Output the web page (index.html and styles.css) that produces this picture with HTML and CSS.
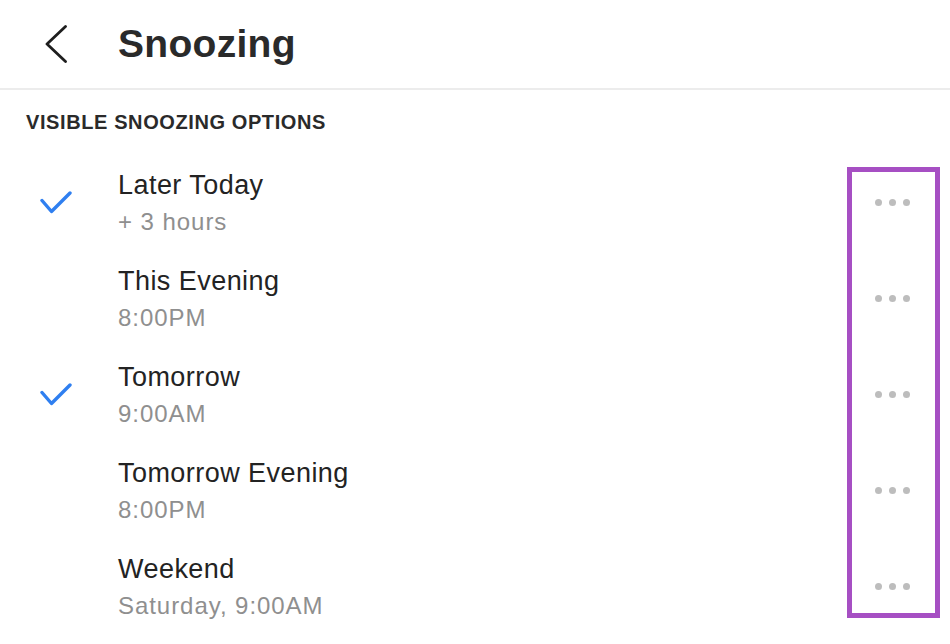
FILE: index.html
```html
<!DOCTYPE html>
<html lang="en">
<head>
<meta charset="utf-8">
<title>Snoozing</title>
<link rel="stylesheet" href="styles.css">
</head>
<body>
<div class="page">
  <header class="topbar">
    <svg class="back" width="22" height="38" viewBox="0 0 22 38" aria-hidden="true">
      <path d="M20.5 1.5 L2 19 L20.5 36.5" fill="none" stroke="#1e1e1e" stroke-width="2.8" stroke-linecap="round" stroke-linejoin="round"/>
    </svg>
    <h1 class="title">Snoozing</h1>
  </header>

  <h2 class="section-label">VISIBLE SNOOZING OPTIONS</h2>

  <ul class="options">
    <li class="option">
      <div class="check-col">
        <svg class="check" width="32" height="24" viewBox="0 0 32 24" aria-hidden="true">
          <path d="M2 9.5 L11.5 20.5 L30 2" fill="none" stroke="#2f7ff0" stroke-width="3.4" stroke-linecap="round" stroke-linejoin="round"/>
        </svg>
      </div>
      <div class="text">
        <div class="name">Later Today</div>
        <div class="when">+ 3 hours</div>
      </div>
      <div class="more"><span></span><span></span><span></span></div>
    </li>
    <li class="option">
      <div class="check-col"></div>
      <div class="text">
        <div class="name">This Evening</div>
        <div class="when">8:00PM</div>
      </div>
      <div class="more"><span></span><span></span><span></span></div>
    </li>
    <li class="option">
      <div class="check-col">
        <svg class="check" width="32" height="24" viewBox="0 0 32 24" aria-hidden="true">
          <path d="M2 9.5 L11.5 20.5 L30 2" fill="none" stroke="#2f7ff0" stroke-width="3.4" stroke-linecap="round" stroke-linejoin="round"/>
        </svg>
      </div>
      <div class="text">
        <div class="name">Tomorrow</div>
        <div class="when">9:00AM</div>
      </div>
      <div class="more"><span></span><span></span><span></span></div>
    </li>
    <li class="option">
      <div class="check-col"></div>
      <div class="text">
        <div class="name">Tomorrow Evening</div>
        <div class="when">8:00PM</div>
      </div>
      <div class="more"><span></span><span></span><span></span></div>
    </li>
    <li class="option">
      <div class="check-col"></div>
      <div class="text">
        <div class="name">Weekend</div>
        <div class="when">Saturday, 9:00AM</div>
      </div>
      <div class="more"><span></span><span></span><span></span></div>
    </li>
  </ul>

  <div class="highlight"></div>
</div>
</body>
</html>
```

FILE: styles.css
```css
* { box-sizing: border-box; }

html, body {
  margin: 0;
  padding: 0;
  background: #ffffff;
}

body {
  font-family: "Liberation Sans", Arial, Helvetica, sans-serif;
  color: #222222;
  overflow: hidden;
}

.page {
  position: relative;
  width: 950px;
  height: 644px;
}

.topbar {
  display: flex;
  align-items: center;
  height: 90px;
  padding-left: 45px;
  padding-bottom: 1px;
  border-bottom: 2px solid #ececec;
}

.back {
  display: block;
  flex: none;
}

.title {
  margin: 0 0 0 51px;
  font-size: 39px;
  font-weight: 700;
  line-height: 46px;
  letter-spacing: 0.3px;
  color: #2a2a2a;
}

.section-label {
  margin: 20px 0 0 26px;
  font-size: 20px;
  line-height: 24px;
  font-weight: 700;
  letter-spacing: 0.6px;
  color: #2a2a2a;
}

.options {
  list-style: none;
  margin: 21px 0 0 0;
  padding: 0;
}

.option {
  display: flex;
  align-items: center;
  height: 96px;
  padding-right: 40px;
}

.check-col {
  width: 118px;
  flex: none;
  padding-left: 40px;
  display: flex;
  align-items: center;
}

.check {
  display: block;
}

.text {
  flex: 1;
}

.name {
  font-size: 27px;
  line-height: 36px;
  letter-spacing: 0.45px;
  color: #232323;
}

.when {
  font-size: 24px;
  line-height: 36px;
  letter-spacing: 0.95px;
  color: #8f8f8f;
  padding-top: 1px;
}

.more {
  display: flex;
  gap: 7px;
  margin-top: -2px;
}

.more span {
  width: 7px;
  height: 7px;
  border-radius: 50%;
  background: #bdbdbd;
}

.highlight {
  position: absolute;
  left: 847px;
  top: 167px;
  width: 93px;
  height: 451px;
  border: 5px solid #a64fc3;
  pointer-events: none;
}
```
